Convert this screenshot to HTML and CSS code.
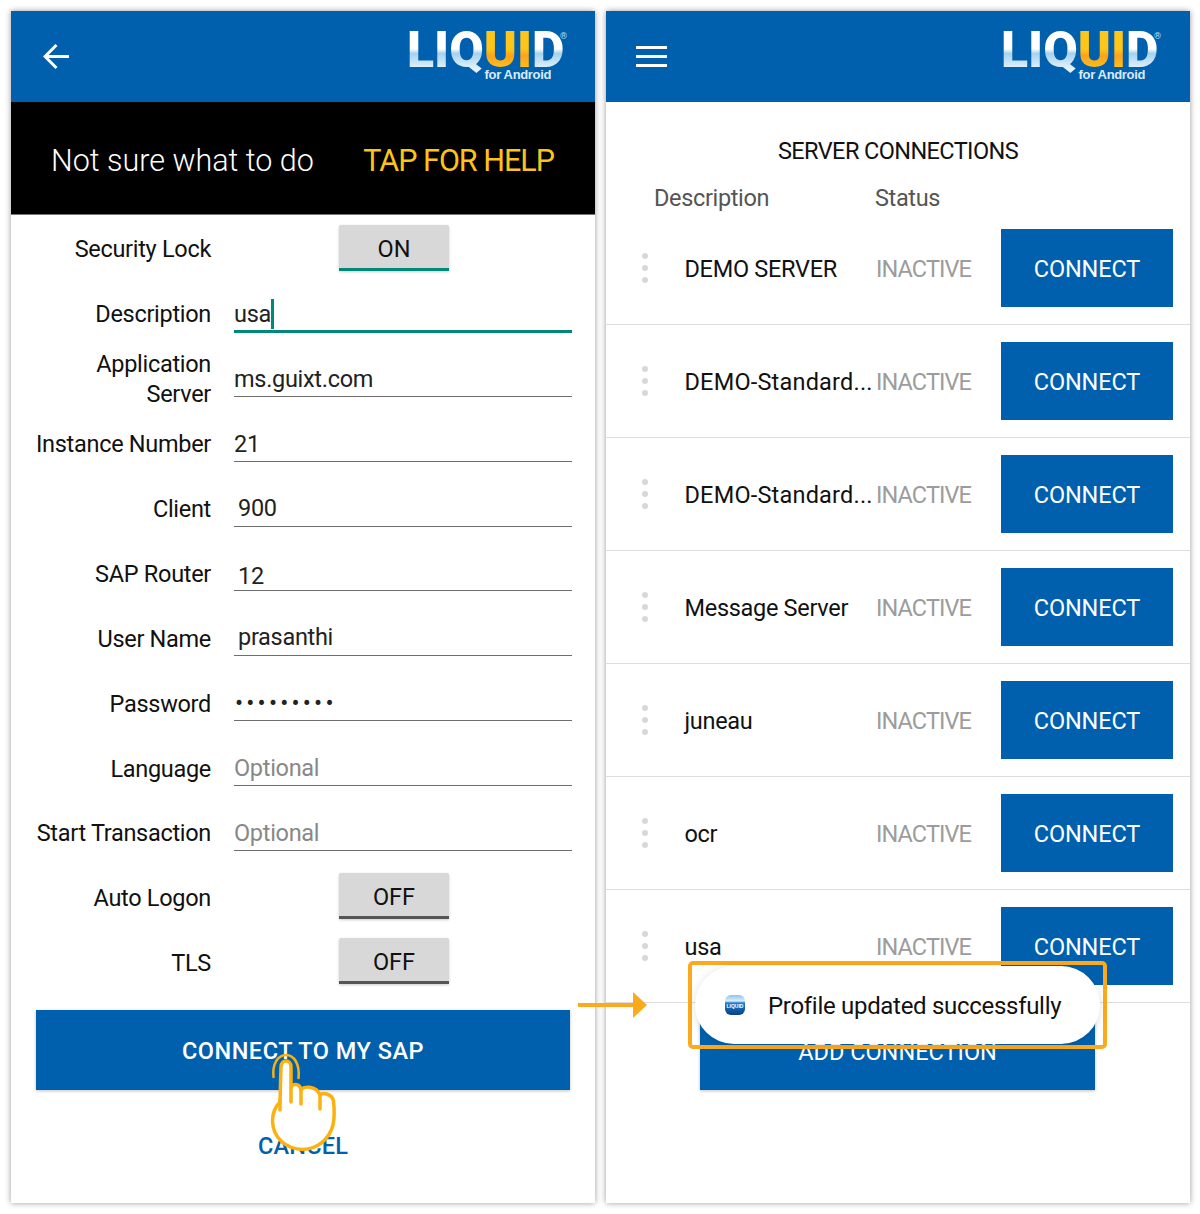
FILE: index.html
```html
<!DOCTYPE html>
<html lang="en">
<head>
<meta charset="utf-8">
<title>Liquid for Android</title>
<link rel="stylesheet" href="styles.css">
</head>
<body>
<main class="panel">
  <header class="appbar appbar-left">
    <svg class="back" viewBox="0 0 26 26" width="26" height="26"><path d="M26 12.5H2M13.5 1 2 12.5 13.5 24" fill="none" stroke="#fff" stroke-width="3"/></svg>
    <div class="logo"><div class="logo-word"><span class="lq">LIQ</span><span class="ui">UI</span><span class="lq">D</span></div><div class="reg">®</div><div class="logo-sub">for Android</div></div>
  </header>
  <div class="help"><span>Not sure what to do</span><span class="help-tap">TAP FOR HELP</span></div>
  <div class="form">
    <div class="label">Security Lock</div><div class="toggle toggle-on">ON</div>
    <div class="label">Description</div><div class="field field-active">usa<i class="cursor"></i></div>
    <div class="label label-two">Application Server</div><div class="field">ms.guixt.com</div>
    <div class="label">Instance Number</div><div class="field">21</div>
    <div class="label">Client</div><div class="field field-in">900</div>
    <div class="label">SAP Router</div><div class="field field-in field-low">12</div>
    <div class="label">User Name</div><div class="field field-in">prasanthi</div>
    <div class="label">Password</div><div class="field field-dots">•••••••••</div>
    <div class="label">Language</div><div class="field field-hint">Optional</div>
    <div class="label">Start Transaction</div><div class="field field-hint">Optional</div>
    <div class="label">Auto Logon</div><div class="toggle">OFF</div>
    <div class="label">TLS</div><div class="toggle">OFF</div>
  </div>
  <div class="primary">CONNECT TO MY SAP</div>
  <div class="cancel">CANCEL</div>
</main>
<main class="panel">
  <header class="appbar appbar-right">
    <div class="burger"><i></i><i></i><i></i></div>
    <div class="logo"><div class="logo-word"><span class="lq">LIQ</span><span class="ui">UI</span><span class="lq">D</span></div><div class="reg">®</div><div class="logo-sub">for Android</div></div>
  </header>
  <div class="title">SERVER CONNECTIONS</div>
  <div class="cols"><span>Description</span><span>Status</span></div>
  <div class="row"><div class="dots"><i></i><i></i><i></i></div><div class="name">DEMO SERVER</div><div class="status">INACTIVE</div><div class="connect">CONNECT</div></div>
  <div class="row"><div class="dots"><i></i><i></i><i></i></div><div class="name name-long">DEMO-Standard...</div><div class="status">INACTIVE</div><div class="connect">CONNECT</div></div>
  <div class="row"><div class="dots"><i></i><i></i><i></i></div><div class="name name-long">DEMO-Standard...</div><div class="status">INACTIVE</div><div class="connect">CONNECT</div></div>
  <div class="row"><div class="dots"><i></i><i></i><i></i></div><div class="name">Message Server</div><div class="status">INACTIVE</div><div class="connect">CONNECT</div></div>
  <div class="row"><div class="dots"><i></i><i></i><i></i></div><div class="name">juneau</div><div class="status">INACTIVE</div><div class="connect">CONNECT</div></div>
  <div class="row"><div class="dots"><i></i><i></i><i></i></div><div class="name">ocr</div><div class="status">INACTIVE</div><div class="connect">CONNECT</div></div>
  <div class="row"><div class="dots"><i></i><i></i><i></i></div><div class="name">usa</div><div class="status">INACTIVE</div><div class="connect">CONNECT</div></div>
  <div class="add">ADD CONNECTION</div>
</main>

<svg class="hand" viewBox="0 0 80 105" width="80" height="105">
  <path d="M11.5 27C10 14 16 5 24 5S38 14 36.500 28" fill="none" stroke="#fbb110" stroke-width="2.500" stroke-linecap="round"/>
  <path d="M19 17C19 9 29 9 29 17V38C30 33 38 33 39 40C41 36 54 35 58 45C61 42 70 44 71.500 51C72.500 60 72.500 68 71 75C67 90 55 99 41 99.500C24 99 11 88 10.500 71C10.500 62 14 56 18 52Z" fill="#fff" stroke="#fbb110" stroke-width="3.500" stroke-linejoin="round"/>
  <path d="M18 50V60M29 38V52M39 40V54M58 45V59" fill="none" stroke="#fbb110" stroke-width="3.500" stroke-linecap="round"/>
</svg>

<svg class="pointer" viewBox="0 0 70 26" width="70" height="26"><path d="M0 11h56v4H0zM55 0l14 13-14 13z" fill="#fca91e"/></svg>

<div class="toast-frame">
  <div class="toast">
    <svg class="toast-icon" viewBox="0 0 24 24" width="24" height="24">
      <defs><linearGradient id="appg" x1="0" y1="0" x2="0" y2="1"><stop offset="0" stop-color="#8cc4ea"/><stop offset=".3" stop-color="#d8eefb"/><stop offset=".4" stop-color="#1f7fcc"/><stop offset="1" stop-color="#063f85"/></linearGradient></defs>
      <rect x="2" y="2" width="20" height="20" rx="6" fill="url(#appg)"/>
      <text x="12" y="15" class="toast-icon-text" text-anchor="middle">LIQUID</text>
    </svg>
    <span class="toast-text">Profile updated successfully</span>
  </div>
</div>
</body>
</html>
```
FILE: styles.css
```css
* { box-sizing: border-box; }
html, body { margin: 0; background: #fff; }
body {
  width: 1200px;
  height: 1214px;
  padding: 11px;
  display: flex;
  gap: 11px;
  overflow: hidden;
  position: relative;
  font-family: Roboto, "Liberation Sans", sans-serif;
  color: #111;
}
.panel {
  width: 584px;
  height: 1192px;
  background: #fff;
  box-shadow: 0 0 6px rgba(0, 0, 0, .4);
  flex: none;
  font-size: 23.5px;
}
.appbar {
  height: 91px;
  background: #0060ae;
  display: flex;
  align-items: flex-start;
  justify-content: space-between;
}
.appbar-left { padding-right: 28px; }
.appbar-right { padding-right: 29px; }
.back { margin: 33px 0 0 32px; }
.burger { margin: 35px 0 0 30px; display: flex; flex-direction: column; gap: 6px; }
.burger i { display: block; width: 31px; height: 3px; background: #fff; }

.logo { width: 160px; margin-top: 20px; position: relative; }
.logo-word {
  font: 900 50px/38px Roboto, "Liberation Sans", sans-serif;
  white-space: nowrap;
}
.logo-word span {
  -webkit-background-clip: text;
  background-clip: text;
  color: transparent;
}
.lq { background-image: linear-gradient(#fff 0 48%, #a5d2ef 56%, #e3f2fb 82%); }
.ui { background-image: linear-gradient(#ffc61a 0 48%, #fca21c 60%, #ffc61a 85%); }
.reg { position: absolute; right: 0; top: 0; font-size: 9px; line-height: 10px; color: #b9d9f0; }
.logo-sub {
  font: 700 13px/12px "Liberation Sans", sans-serif;
  color: #dbeaf6;
  text-align: right;
  padding-right: 16px;
  letter-spacing: -.35px;
}

.help {
  height: 113px;
  background: #000;
  color: #fff;
  display: flex;
  justify-content: space-between;
  align-items: center;
  padding: 4px 41px 0 40px;
  font-size: 30.5px;
  font-weight: 300;
  border-bottom: 1px solid #777;
}
.help-tap { color: #fdc31a; font-weight: 400; letter-spacing: -1px; }

.form {
  display: grid;
  grid-template-columns: 200px 338px;
  column-gap: 23px;
  grid-auto-rows: 64.9px;
  padding-top: 2px;
}
.label { text-align: right; align-self: center; line-height: 30px; letter-spacing: -.3px; }
.label-two { padding-left: 60px; }
.field {
  height: 50px;
  padding-top: 17px;
  line-height: 30px;
  border-bottom: 1.5px solid #6e6e6e;
  color: #222;
  white-space: nowrap;
  letter-spacing: -.3px;
}
.field-active { border-bottom: 3px solid #00897b; height: 51px; position: relative; }
.field-in { padding-left: 4px; padding-top: 16px; }
.field-low { padding-top: 20px; }
.field-dots { padding-left: 1px; letter-spacing: 3.2px; font-size: 24px; }
.field-hint { color: #888; }
.cursor {
  display: inline-block;
  width: 3px;
  height: 30px;
  background: #00897b;
  vertical-align: top;
}
.toggle {
  width: 110px;
  height: 46px;
  margin: 7.5px 0 0 105px;
  background: #d8d8d8;
  border-bottom: 3px solid #555;
  border-radius: 2px 2px 0 0;
  box-shadow: 0 1px 3px rgba(0, 0, 0, .2);
  text-align: center;
  line-height: 49px;
}
.toggle-on { border-bottom-color: #00897b; }

.primary {
  width: 534px;
  height: 80px;
  margin: 14px 0 0 25px;
  background: #0060ae;
  color: #fff;
  font-weight: 500;
  text-align: center;
  line-height: 82px;
  letter-spacing: .5px;
  box-shadow: 0 1px 3px rgba(0, 0, 0, .25);
}
.cancel {
  margin-top: 41px;
  text-align: center;
  color: #0060ae;
  font-weight: 500;
  line-height: 30px;
  letter-spacing: .2px;
}

.title { margin-top: 34px; text-align: center; line-height: 30px; letter-spacing: -.6px; }
.cols {
  margin-top: 17px;
  height: 29px;
  line-height: 30px;
  padding-left: 48px;
  display: grid;
  grid-template-columns: 221px auto;
  color: #555;
  letter-spacing: -.35px;
}
.row {
  height: 113px;
  padding-left: 36px;
  display: grid;
  grid-template-columns: 42.5px 191.5px 125px 172px;
  align-items: center;
  align-content: center;
  border-bottom: 1.500px solid #ddd;
}
.dots { display: flex; flex-direction: column; gap: 6px; }
.dots i { display: block; width: 6px; height: 6px; border-radius: 50%; background: #d8d8d8; }
.name { white-space: nowrap; letter-spacing: -.3px; padding-top: 2px; }
.name-long { letter-spacing: .2px; }
.status { color: #9c9c9c; letter-spacing: -.9px; padding-top: 2px; }
.connect {
  height: 78px;
  background: #0060ae;
  color: #fff;
  text-align: center;
  line-height: 80px;
  letter-spacing: -.15px;
}
.add {
  width: 395px;
  height: 77px;
  margin: 10px 0 0 94px;
  background: #0060ae;
  color: #fff;
  text-align: center;
  line-height: 78px;
  box-shadow: 0 1px 3px rgba(0, 0, 0, .25);
}

.hand { position: absolute; left: 262px; top: 1050px; }
.pointer { position: absolute; left: 578px; top: 992px; }
.toast-frame {
  position: absolute;
  left: 688px;
  top: 961px;
  width: 419px;
  height: 88px;
  border: 4px solid #fca91e;
  border-radius: 5px;
}
.toast {
  position: absolute;
  left: 3px;
  top: 1px;
  width: 405px;
  height: 78px;
  border-radius: 39px;
  background: #fff;
  box-shadow: 0 1px 8px rgba(0, 0, 0, .12);
  display: flex;
  align-items: center;
  padding-left: 28px;
  gap: 21px;
  font-size: 24px;
  color: #111;
}
.toast-icon { flex: none; }
.toast-text { letter-spacing: -.3px; padding-top: 2px; }
.toast-icon-text { font: 700 5px "Liberation Sans", sans-serif; fill: #fff; }
```
